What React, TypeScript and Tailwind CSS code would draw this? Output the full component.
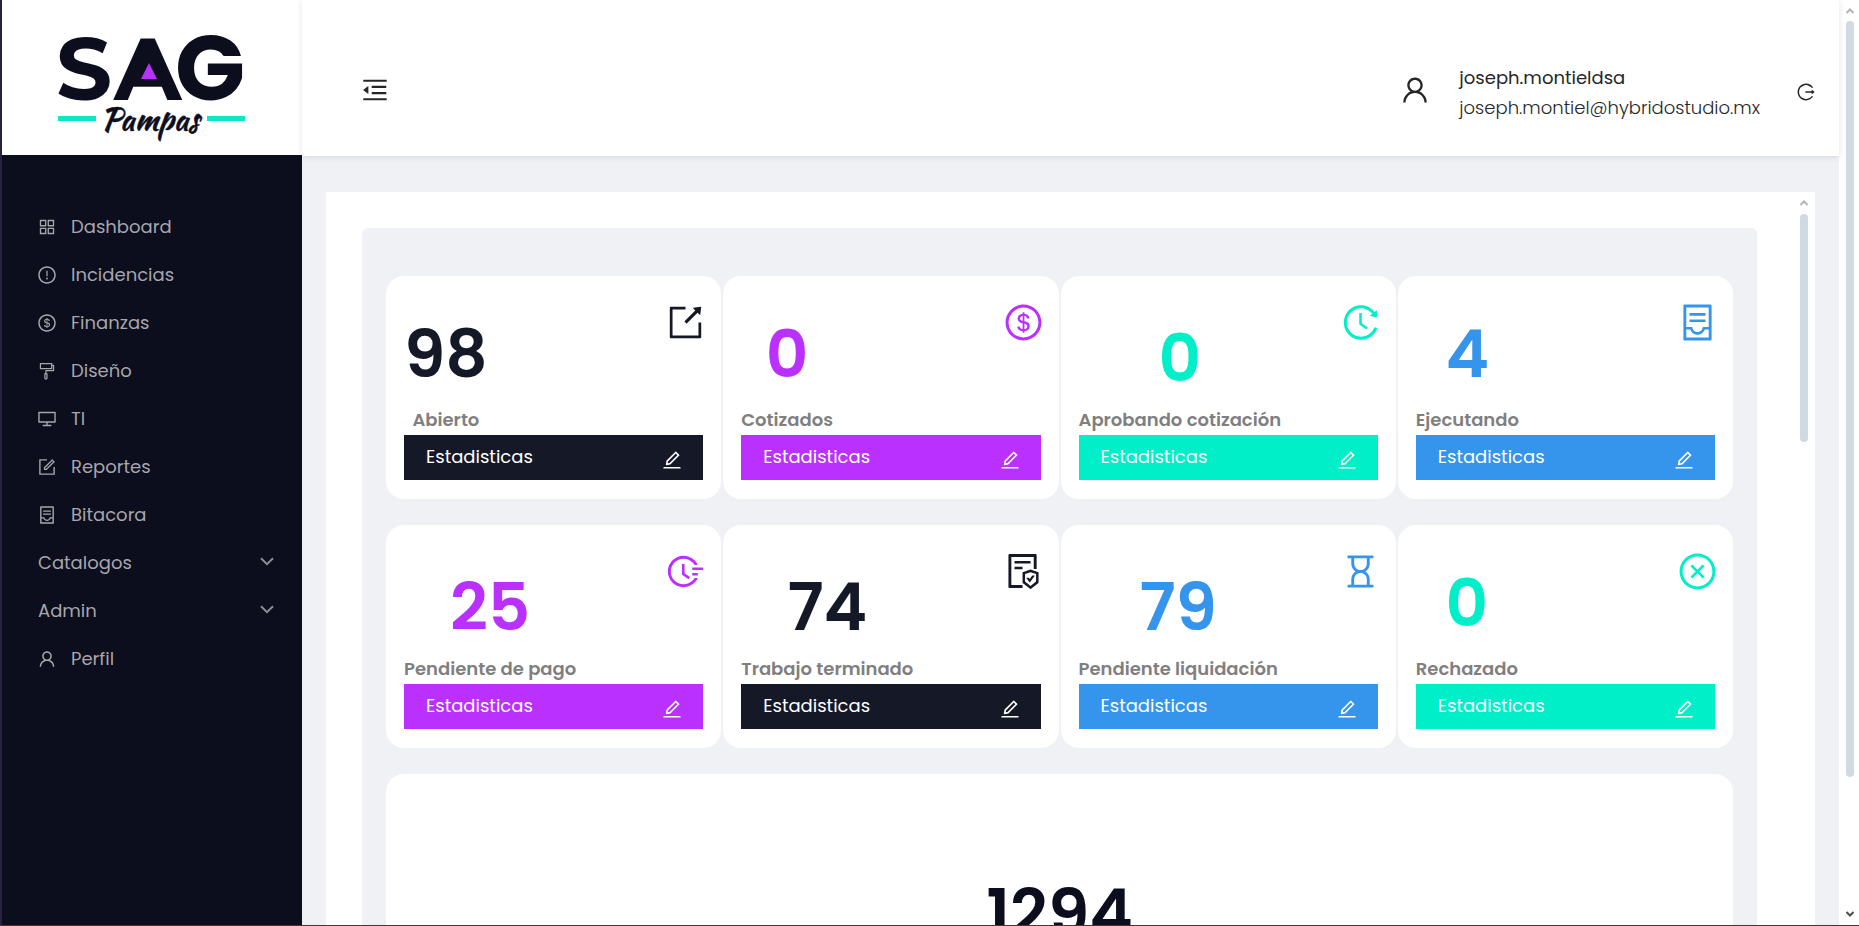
import type { IconType } from "react-icons";
import {
  AiOutlineAppstore,
  AiOutlineCloseCircle,
  AiOutlineContainer,
  AiOutlineDesktop,
  AiOutlineDollarCircle,
  AiOutlineEdit,
  AiOutlineExclamationCircle,
  AiOutlineFieldTime,
  AiOutlineFileProtect,
  AiOutlineForm,
  AiOutlineFormatPainter,
  AiOutlineHistory,
  AiOutlineHourglass,
  AiOutlineLogout,
  AiOutlineMenuFold,
  AiOutlineUser,
} from "react-icons/ai";

type IconProps = { className?: string };

function ShareBoxIcon({ className }: IconProps) {
  return (
    <svg viewBox="0 0 1024 1024" fill="currentColor" className={className} aria-hidden="true">
      <path d="M904 512h-68v324H188V188h324v-68H152c-18 0-32 14-32 32v720c0 18 14 32 32 32h720c18 0 32-14 32-32V512z" />
      <path d="M904 128c0-5-4-9-9-8l-188 24c-7 1-9 9-5 13l54 54-268 268c-3 3-3 8 0 11l45 45c3 3 8 3 11 0l268-268 54 54c5 5 13 2 14-5z" />
    </svg>
  );
}

function ChevronIcon({ className }: IconProps) {
  return (
    <svg viewBox="0 0 14 9" className={className} fill="none" stroke="currentColor" strokeWidth="2" aria-hidden="true">
      <path d="M1 1.2 7 7.2 13 1.2" />
    </svg>
  );
}

type NavItem = { label: string; Icon?: IconType; expandable?: boolean };

const navItems: NavItem[] = [
  { label: "Dashboard", Icon: AiOutlineAppstore },
  { label: "Incidencias", Icon: AiOutlineExclamationCircle },
  { label: "Finanzas", Icon: AiOutlineDollarCircle },
  { label: "Diseño", Icon: AiOutlineFormatPainter },
  { label: "TI", Icon: AiOutlineDesktop },
  { label: "Reportes", Icon: AiOutlineForm },
  { label: "Bitacora", Icon: AiOutlineContainer },
  { label: "Catalogos", expandable: true },
  { label: "Admin", expandable: true },
  { label: "Perfil", Icon: AiOutlineUser },
];

type Stat = {
  value: number;
  label: string;
  Icon: IconType | typeof ShareBoxIcon;
  text: string;
  bar: string;
};

const ink = { text: "text-[#151826]", bar: "bg-[#151826]" };
const purple = { text: "text-[#b930ff]", bar: "bg-[#b930ff]" };
const mint = { text: "text-[#00efc8]", bar: "bg-[#00efc8]" };
const blue = { text: "text-[#3594ec]", bar: "bg-[#3594ec]" };

const stats: Stat[] = [
  { value: 98, label: "Abierto", Icon: ShareBoxIcon, ...ink },
  { value: 0, label: "Cotizados", Icon: AiOutlineDollarCircle, ...purple },
  { value: 0, label: "Aprobando cotización", Icon: AiOutlineHistory, ...mint },
  { value: 4, label: "Ejecutando", Icon: AiOutlineContainer, ...blue },
  { value: 25, label: "Pendiente de pago", Icon: AiOutlineFieldTime, ...purple },
  { value: 74, label: "Trabajo terminado", Icon: AiOutlineFileProtect, ...ink },
  { value: 79, label: "Pendiente liquidación", Icon: AiOutlineHourglass, ...blue },
  { value: 0, label: "Rechazado", Icon: AiOutlineCloseCircle, ...mint },
];

function Logo() {
  return (
    <svg viewBox="-16 -36 220 155" className="h-[155px] w-[220px]" role="img" aria-label="SAG Pampas">
      <g fill="#0c0d1d" fontFamily="Montserrat, Poppins, sans-serif" fontWeight="700" fontSize="88">
        <text x="-2" y="64">S</text>
        <text x="56" y="64">A</text>
        <text x="117" y="64" fontFamily="Poppins, sans-serif" fontSize="92">G</text>
      </g>
      <polygon points="90,8 76,50 106,50" fill="#0c0d1d" />
      <polygon points="91,27 83,43 99,43" fill="#b930ff" />
      <rect x="0" y="80" width="38" height="5" fill="#13e4c4" />
      <rect x="149" y="80" width="38" height="5" fill="#13e4c4" />
      <text x="92" y="94" textAnchor="middle" fill="#0c0d1d" stroke="#0c0d1d" strokeWidth="0.6" fontFamily="'Kaushan Script', Lato, sans-serif" fontSize="31">
        Pampas
      </text>
    </svg>
  );
}

function Sidebar() {
  return (
    <aside className="flex w-[302px] shrink-0 flex-col border-l-2 border-[#2a2040] bg-[#0c0d1d]">
      <div className="flex h-[155px] shrink-0 justify-center bg-white">
        <Logo />
      </div>
      <nav className="pt-12">
        {navItems.map(({ label, Icon, expandable }) => {
          const row = "flex h-12 w-full items-center pr-7 pl-[35px] text-left text-lg text-[#a6a6ad]";
          if (expandable) {
            return (
              <button key={label} type="button" className={row}>
                <span className="grow pl-px">{label}</span>
                <ChevronIcon className="mb-1 h-[9px] w-3.5 text-[#8d8d96]" />
              </button>
            );
          }
          return (
            <a key={label} href="#" className={row}>
              {Icon && <Icon className="mr-3.5 size-5" />}
              {label}
            </a>
          );
        })}
      </nav>
    </aside>
  );
}

function Header() {
  return (
    <header className="z-10 flex h-[156px] shrink-0 items-center bg-white pt-6 pr-[23px] pl-[58px] shadow-[0_1px_6px_rgba(0,21,41,0.12)] text-[#262626]">
      <button type="button" aria-label="Contraer menú">
        <AiOutlineMenuFold className="size-[30px]" />
      </button>
      <AiOutlineUser className="ml-auto size-8" />
      <div className="ml-7 pt-1.5 text-lg leading-[30px]">
        <p>joseph.montieldsa</p>
        <p className="font-light">joseph.montiel@hybridostudio.mx</p>
      </div>
      <button type="button" aria-label="Cerrar sesión" className="ml-9 pt-1">
        <AiOutlineLogout className="size-5" />
      </button>
    </header>
  );
}

function StatCard({ value, label, Icon, text, bar }: Stat) {
  const labelGap = label.length > 12 ? "mt-[5px]" : "mt-[9px]";
  return (
    <article className="relative flex h-[223px] flex-col items-start rounded-[18px] bg-white px-[18px] pb-[19px]">
      <Icon className={`absolute top-[26px] right-[15px] size-[41px] ${text}`} />
      <div className="flex grow flex-col items-center justify-end">
        <span className={`text-[66px] leading-[84px] font-semibold ${text}`}>{value}</span>
        <span className={`text-lg leading-[30px] font-semibold text-[#7f7f7f] ${labelGap}`}>{label}</span>
      </div>
      <button type="button" className={`flex h-[45px] w-full shrink-0 items-center justify-between pr-5 pb-0.5 pl-[22px] text-lg text-white ${bar}`}>
        Estadisticas
        <AiOutlineEdit className="mt-1.5 size-[22px]" />
      </button>
    </article>
  );
}

function Caret({ className }: IconProps) {
  return (
    <svg viewBox="0 0 8 6" className={className} fill="none" stroke="currentColor" strokeWidth="2" aria-hidden="true">
      <path d="M0.5 5 4 1.5 7.5 5" />
    </svg>
  );
}

export default function App() {
  return (
    <div className="flex h-screen overflow-hidden border-b border-[#3a3a3c] bg-white font-[Poppins,Inter,sans-serif]">
      <Sidebar />
      <div className="flex min-w-0 grow flex-col bg-[#f0f1f5]">
        <Header />
        <main className="mx-6 mt-9 flex min-h-0 grow bg-white">
          <div className="min-w-0 grow overflow-hidden pt-9 pl-9">
            <div className="min-h-full rounded-md bg-[#f0f1f5] px-6 pt-12">
              <section className="grid grid-cols-4 gap-x-[2px] gap-y-[26px]">
                {stats.map((stat) => (
                  <StatCard key={stat.label} {...stat} />
                ))}
                <article className="col-span-4 h-[223px] rounded-[18px] bg-white pt-[101px] text-center text-[66px] leading-[76px] font-semibold text-[#0c0d1d]">
                  1294
                </article>
              </section>
            </div>
          </div>
          <div className="flex w-[58px] shrink-0 flex-col items-end pt-2 pr-[7px]">
            <Caret className="h-1.5 w-2 text-[#b4b4b4]" />
            <div className="mt-2 h-[228px] w-2 rounded-full bg-[#d0dae3]" />
          </div>
        </main>
      </div>
      <div className="flex w-5 shrink-0 flex-col items-center bg-white py-2 pl-0.5">
        <Caret className="h-1.5 w-2 text-[#b4b4b4]" />
        <div className="mt-[7px] h-[756px] w-2 rounded-full bg-[#d0dae3]" />
        <Caret className="mt-auto h-1.5 w-2 rotate-180 text-[#505050]" />
      </div>
    </div>
  );
}
